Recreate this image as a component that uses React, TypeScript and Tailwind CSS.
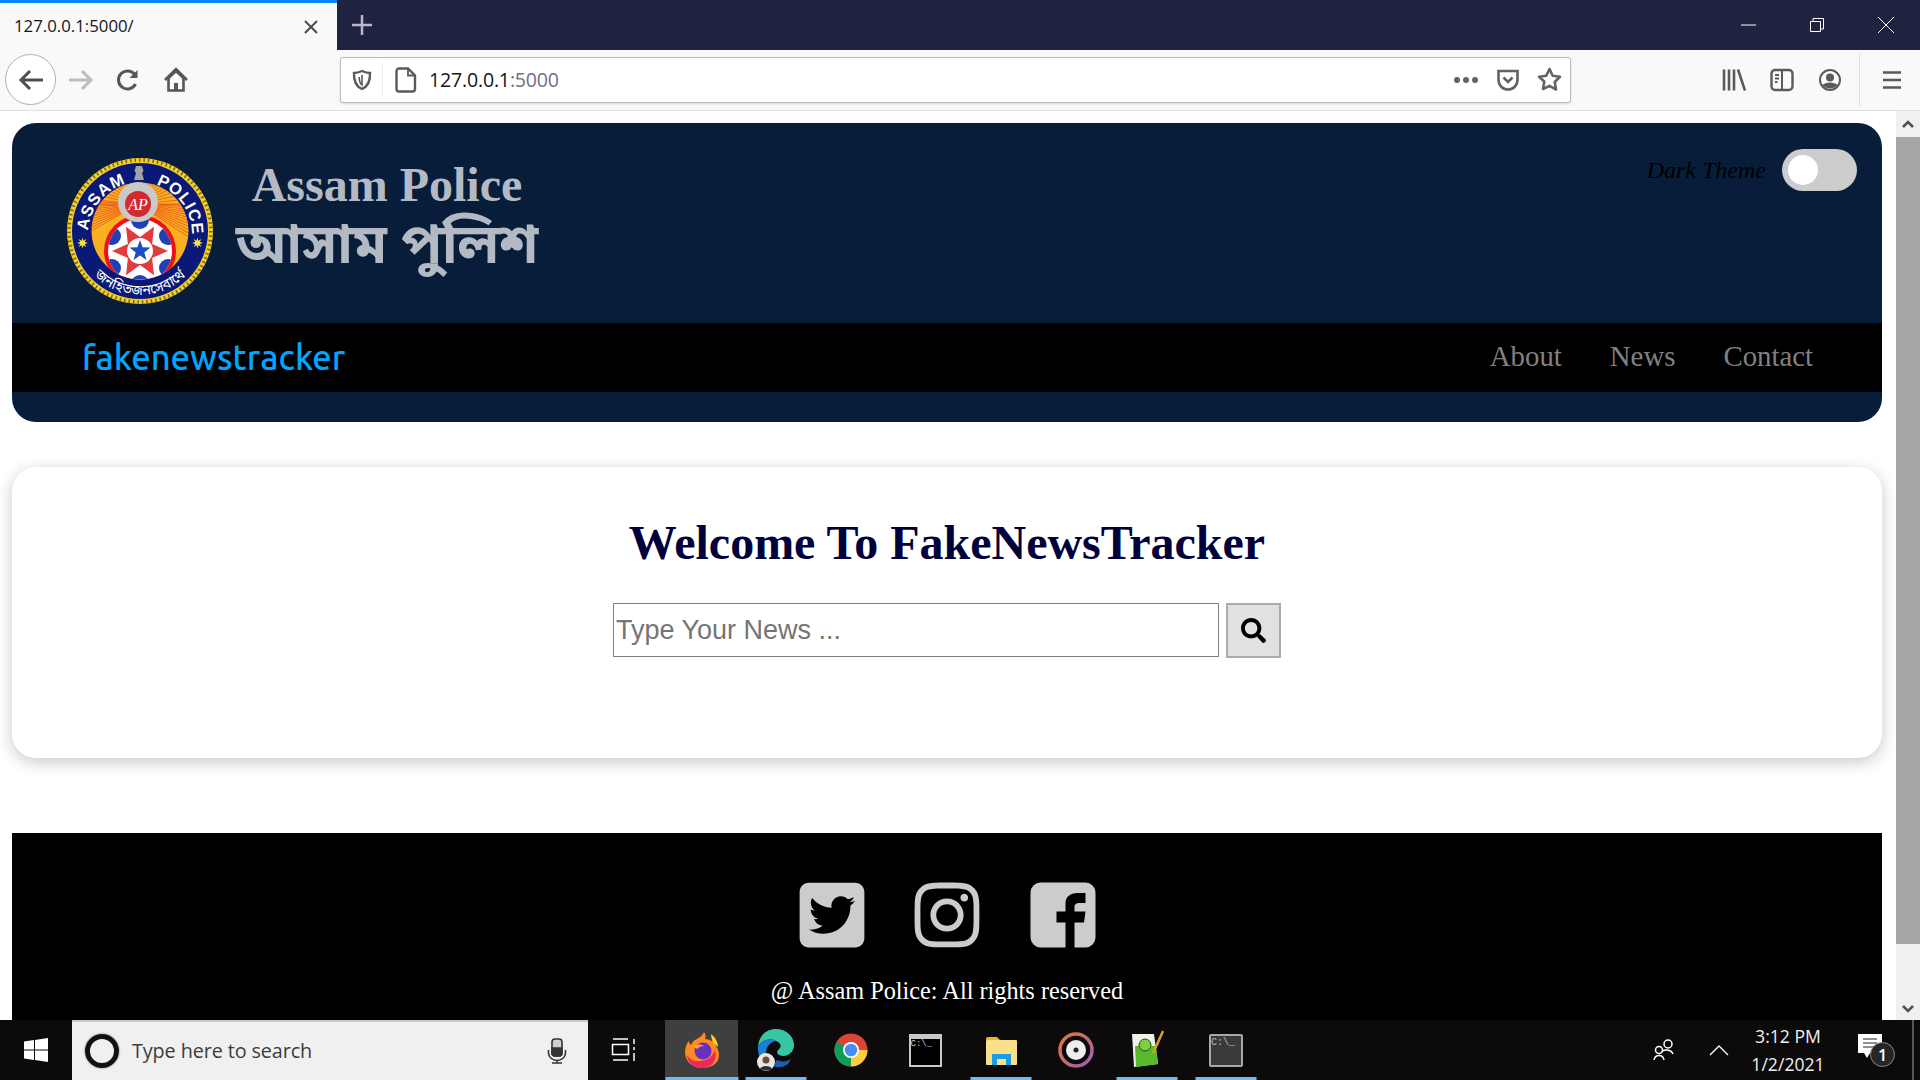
import { FaSearch } from "react-icons/fa";
import { FaInstagram, FaSquareTwitter } from "react-icons/fa6";

// Browser tab strip with window controls
const TabBar = () => (
  <div className="flex h-[50px] bg-[#20233f] text-[#fbfbfe]">
    <div className="flex w-[337px] items-center justify-between border-t-[3px] border-[#0a84ff] bg-[#f9f9fa] pl-[14px] pr-[18px] text-[16.8px] text-[#15141a]">
      <span className="pb-[2px]">127.0.0.1:5000/</span>
      <svg width="16" height="16" viewBox="0 0 16 16" stroke="#4a4a4f" strokeWidth="2" fill="none">
        <path d="M2 2l12 12M14 2L2 14" />
      </svg>
    </div>
    <div className="flex w-[50px] items-center justify-center">
      <svg width="22" height="22" viewBox="0 0 22 22" stroke="#b8bac6" strokeWidth="2.5" fill="none">
        <path d="M11 1v20M1 11h20" />
      </svg>
    </div>
    <div className="flex-1" />
    <div className="flex w-[69px] items-center justify-center">
      <svg width="16" height="16" viewBox="0 0 16 16" stroke="#fff" fill="none">
        <path d="M0 8h15" />
      </svg>
    </div>
    <div className="flex w-[69px] items-center justify-center pr-[2px]">
      <svg width="16" height="16" viewBox="0 0 16 16" stroke="#fff" fill="none">
        <path d="M1.5 4.5h10v10h-10zM4 4V1.5h10.5V12H12" />
      </svg>
    </div>
    <div className="flex w-[68px] items-center justify-center">
      <svg width="18" height="18" viewBox="0 0 18 18" stroke="#fff" fill="none">
        <path d="M1 1l16 16M17 1L1 17" />
      </svg>
    </div>
  </div>
);

// Navigation row with the address bar
const Toolbar = () => (
  <div className="flex h-[61px] items-center border-b border-[#e0e0e1] bg-[#f9f9fa] pb-[1px]">
    <div className="ml-[5px] flex h-[51px] w-[51px] items-center justify-center rounded-full border border-[#b1b1b3] bg-white">
      <svg width="26" height="24" viewBox="0 0 26 24" stroke="#4f4f52" strokeWidth="3" fill="none">
        <path d="M25 12H3M12 3l-9 9 9 9" />
      </svg>
    </div>
    <div className="flex w-[49px] justify-center">
      <svg width="26" height="24" viewBox="0 0 26 24" stroke="#bcbcbe" strokeWidth="3" fill="none">
        <path d="M1 12h22M14 3l9 9-9 9" />
      </svg>
    </div>
    <div className="flex w-[46px] justify-center">
      <svg width="24" height="24" viewBox="0 0 24 24" stroke="#55555a" strokeWidth="3" fill="none">
        <path d="M19.5 16a9 9 0 1 1-.5-9" />
        <path d="M21.5 2v8h-8" fill="#55555a" stroke="none" />
      </svg>
    </div>
    <div className="flex w-[50px] justify-center">
      <svg width="26" height="26" viewBox="0 0 26 26" fill="#55555a" stroke="#55555a" strokeWidth="2.6">
        <path d="M2 13L13 2l11 11" fill="none" />
        <path d="M5.5 11v12.5h15V11L13 4z" fill="none" />
        <rect x="11" y="16" width="4" height="7" stroke="none" />
      </svg>
    </div>
    <div className="ml-[139px] flex h-[46px] w-[1231px] items-center rounded-[3px] border border-[#bcbcbc] bg-white shadow-sm">
      <div className="flex h-[34px] w-[42px] items-center justify-center border-r border-[#ececec]">
        <svg width="20" height="22" viewBox="0 0 20 22" fill="none" stroke="#5a5a5e" strokeWidth="2.4">
          <path d="M10 2c3 1.4 5.500 2 8 2 .3 7-1 13-8 16C3 17 1.700 11 2 4c2.500 0 5-.6 8-2z" />
          <path d="M10 6v10c-2-1.500-2.800-5-2.800-8" strokeWidth="1.6" />
        </svg>
      </div>
      <div className="flex w-[46px] justify-center">
        <svg width="22" height="26" viewBox="0 0 22 26" fill="none" stroke="#5a5a5e" strokeWidth="2.4">
          <path d="M4 1.500h9l7 7V22a2.500 2.500 0 0 1-2.500 2.500H4A2.500 2.500 0 0 1 1.500 22V4A2.500 2.500 0 0 1 4 1.500z" />
          <path d="M13 2v6.500h7" strokeWidth="1.8" />
        </svg>
      </div>
      <div className="text-[19.6px] leading-none tracking-[-0.2px] text-[#15141a]">
        127.0.0.1<span className="text-[#6f7080]">:5000</span>
      </div>
      <div className="flex-1" />
      <div className="flex w-[40px] justify-center gap-[3px]">
        <span className="h-[6px] w-[6px] rounded-full bg-[#636367]" />
        <span className="h-[6px] w-[6px] rounded-full bg-[#636367]" />
        <span className="h-[6px] w-[6px] rounded-full bg-[#636367]" />
      </div>
      <div className="flex w-[44px] justify-center">
        <svg width="24" height="24" viewBox="0 0 24 24" fill="none" stroke="#636367" strokeWidth="2.6">
          <path d="M2.500 3h19v9a9.500 9.500 0 0 1-19 0z" />
          <path d="M7.500 9.500l4.500 4.500 4.500-4.500" />
        </svg>
      </div>
      <div className="flex w-[40px] justify-center pr-[2px]">
        <svg width="25" height="25" viewBox="0 0 25 25" fill="none" stroke="#636367" strokeWidth="2.6" strokeLinejoin="round">
          <path d="M12.500 2l3.200 6.800 7.300 1-5.300 5.200 1.300 7.500-6.500-3.600L6 22l1.300-7.500L2 9.800l7.300-1z" />
        </svg>
      </div>
    </div>
    <div className="ml-[139px] flex w-[48px] justify-center">
      <svg width="24" height="24" viewBox="0 0 24 24" fill="none" stroke="#5a5a5e" strokeWidth="2.6">
        <path d="M2 1.500v21M7 1.500v21M12 1.500v21M16 1.500l7 21" />
      </svg>
    </div>
    <div className="flex w-[48px] justify-center">
      <svg width="24" height="24" viewBox="0 0 24 24" fill="none" stroke="#5a5a5e" strokeWidth="2.4">
        <rect x="1.500" y="2" width="21" height="20" rx="3.500" />
        <path d="M12 2v20M5 7h4M5 10.500h4M5 14h2.500" strokeWidth="2" />
      </svg>
    </div>
    <div className="flex w-[48px] justify-center">
      <svg width="24" height="24" viewBox="0 0 24 24" fill="none" stroke="#5a5a5e" strokeWidth="2">
        <circle cx="12" cy="12" r="10" />
        <circle cx="12" cy="9.500" r="4" fill="#5a5a5e" stroke="none" />
        <path d="M4.500 17c3-3.500 12-3.500 15 0-3 4.500-12 4.500-15 0z" fill="#5a5a5e" stroke="none" />
      </svg>
    </div>
    <div className="ml-[5px] h-[54px] w-[1px] bg-[#e0e0e1]" />
    <div className="flex w-[60px] justify-center pl-[4px]">
      <svg width="20" height="20" viewBox="0 0 20 20" stroke="#5a5a5e" strokeWidth="2.6" fill="none">
        <path d="M1 2.500h18M1 10h18M1 17.500h18" />
      </svg>
    </div>
  </div>
);

const starPoints = (cx: number, cy: number, points: number, outer: number, inner: number, start: number) =>
  Array.from({ length: points * 2 }, (_, i) => {
    const r = i % 2 === 0 ? outer : inner;
    const a = ((start + (i * 180) / points) * Math.PI) / 180;
    return `${cx + r * Math.cos(a)},${cy + r * Math.sin(a)}`;
  }).join(" ");

// Assam Police crest
const Emblem = () => {
  const rays = Array.from({ length: 29 }, (_, i) => 179 + i * 6.5).concat(
    Array.from({ length: 12 }, (_, i) => 150 + i * 3),
    Array.from({ length: 12 }, (_, i) => i * 3)
  );
  return (
    <svg width="146" height="146" viewBox="0 0 146 146">
      <defs>
        <path id="topArc" d="M21 76A52 52 0 1 1 125 76" />
        <path id="bottomArc" d="M17.600 105A64 64 0 0 0 128.400 105" />
        <clipPath id="discClip">
          <circle cx="73" cy="73" r="48.500" />
        </clipPath>
        <clipPath id="whiteClip">
          <circle cx="73" cy="93" r="32" />
        </clipPath>
      </defs>
      <circle cx="73" cy="73" r="73" fill="#f2cf2a" />
      <circle cx="73" cy="73" r="71" fill="none" stroke="#7a6412" strokeWidth="3.500" strokeDasharray="1.500 3" />
      <circle cx="73" cy="73" r="68" fill="#0a1878" />
      <g clipPath="url(#discClip)">
        <circle cx="73" cy="73" r="49" fill="#fbb022" />
        <g stroke="#e8561c" strokeWidth="0.800">
          {rays.map((angle) => (
            <line
              key={angle}
              x1="71"
              y1="46"
              x2={71 + 70 * Math.cos((angle * Math.PI) / 180)}
              y2={46 + 70 * Math.sin((angle * Math.PI) / 180)}
            />
          ))}
        </g>
        <circle cx="73" cy="93" r="36" fill="#ef0f14" />
        <circle cx="73" cy="93" r="32" fill="#ffffff" />
        <g clipPath="url(#whiteClip)" fill="#2140b5">
          <circle cx="73" cy="62" r="9" />
          <circle cx="45" cy="78" r="9" />
          <circle cx="101" cy="78" r="9" />
          <circle cx="45" cy="110" r="9" />
          <circle cx="101" cy="110" r="9" />
          <circle cx="73" cy="126" r="9" />
        </g>
        <polygon points={starPoints(73, 93, 6, 28, 14, 0)} fill="#e23a3f" />
        <circle cx="73" cy="93" r="13" fill="#ffffff" />
        <polygon points={starPoints(73, 93, 5, 11, 4.500, -90)} fill="#1d4fc4" />
      </g>
      <circle cx="71" cy="44" r="20" fill="#c9c9c9" />
      <circle cx="71" cy="46" r="13" fill="#d32a2f" />
      <text x="71" y="52" textAnchor="middle" fontSize="16" fontFamily="'Liberation Serif', serif" fontStyle="italic" fill="#fff">
        AP
      </text>
      <path d="M69 8h6l1.500 5-1.500 2 2 7h-10l2-7-1.500-2z" fill="#a3a3a3" />
      <text fontSize="16.500" fontWeight="700" fontFamily="'Liberation Sans', sans-serif" fill="#fff" letterSpacing="1">
        <textPath href="#topArc" startOffset="2%">ASSAM</textPath>
      </text>
      <text fontSize="16.500" fontWeight="700" fontFamily="'Liberation Sans', sans-serif" fill="#fff" letterSpacing="0.800">
        <textPath href="#topArc" startOffset="60%">POLICE</textPath>
      </text>
      <text fontSize="14" fill="#fff" fontFamily="'Noto Sans Bengali', 'Noto Sans', sans-serif" textAnchor="middle">
        <textPath href="#bottomArc" startOffset="50%">জনহিতজনসেবার্থে</textPath>
      </text>
      <polygon points={starPoints(15.500, 85, 8, 5.500, 2.500, 0)} fill="#f7e23a" />
      <polygon points={starPoints(130.500, 85, 8, 5.500, 2.500, 0)} fill="#f7e23a" />
    </svg>
  );
};

// Site header with logo, theme toggle and nav links
const Header = () => (
  <header className="mt-[12px] h-[299px] rounded-[24px] bg-[#071d3a] pb-[30px]">
    <div className="flex h-[200px] justify-between pl-[55px] pr-[25px]">
      <div className="flex pt-[35px]">
        <Emblem />
        <div className="ml-[22px] flex w-[304px] flex-col items-center">
          <div className="mt-[3px] font-['Liberation_Serif',serif] text-[48px] font-bold leading-[48px] text-[#b4bac4]">
            Assam Police
          </div>
          <div className="mt-[4px] whitespace-nowrap font-['Noto_Sans_Bengali','Noto_Sans',sans-serif] text-[55px] font-bold leading-[72px] text-[#b4bac4]">
            আসাম পুলিশ
          </div>
        </div>
      </div>
      <div className="flex h-fit items-center gap-[16px] pt-[26px]">
        <span className="font-['Liberation_Serif',serif] text-[24px] italic text-black">Dark Theme</span>
        <div className="flex h-[42px] w-[75px] items-center rounded-full bg-[#cccccc] px-[6px]">
          <div className="h-[30px] w-[30px] rounded-full bg-white" />
        </div>
      </div>
    </div>
    <nav className="flex h-[69px] items-center justify-between bg-black pl-[70px] pr-[69px]">
      <a className="pt-[1px] font-['Ubuntu','Noto_Sans',sans-serif] text-[34.6px] font-medium text-[#00a5ff]">fakenewstracker</a>
      <div className="flex gap-[48px] pb-[2px] font-['Liberation_Serif',serif] text-[28.8px] text-[#808080]">
        <a>About</a>
        <a>News</a>
        <a>Contact</a>
      </div>
    </nav>
  </header>
);

const SearchCard = () => (
  <section className="mt-[45px] h-[291px] rounded-[24px] bg-white pt-[48px] shadow-[0_4px_16px_rgba(0,0,0,0.22)]">
    <h1 className="text-center font-['Liberation_Serif',serif] text-[48px] font-bold leading-[55px] text-[#00003a]">
      Welcome To FakeNewsTracker
    </h1>
    <div className="mt-[33px] flex justify-center gap-[7px]">
      <input
        className="h-[54px] w-[606px] border border-[#808080] px-[2px] font-['Liberation_Sans',sans-serif] text-[27px] outline-none placeholder:text-[#757575]"
        placeholder="Type Your News ..."
      />
      <button className="flex h-[55px] w-[55px] items-center justify-center border-2 border-[#ababab] bg-[#e1e1e1] text-[25px] text-black">
        <FaSearch />
      </button>
    </div>
  </section>
);

const Footer = () => (
  <footer className="mt-[75px] flex-1 bg-black pt-[45px] text-center">
    <div className="flex items-center justify-center gap-[41.500px] text-[74px] text-[#cccccc]">
      <FaSquareTwitter />
      <FaInstagram />
      <svg width="74" height="74" viewBox="-4.500 -4.500 74 74" fill="currentColor">
        <path
          fillRule="evenodd"
          d="M10 0h45a10 10 0 0 1 10 10v45a10 10 0 0 1-10 10H44V40h9.500L55 29H44v-4.500c0-3 2-4 5-4h6v-10h-8C40 10.500 35 14 35 21v8h-9v11h9v25H10A10 10 0 0 1 0 55V10A10 10 0 0 1 10 0z"
        />
      </svg>
    </div>
    <p className="mt-[21px] font-['Liberation_Serif',serif] text-[24.3px] text-white">@ Assam Police: All rights reserved</p>
  </footer>
);

const ScrollBar = () => (
  <div className="flex w-[24px] flex-col bg-[#f0f0f0]">
    <div className="flex h-[26px] items-center justify-center">
      <svg width="12" height="8" viewBox="0 0 12 8" stroke="#505050" strokeWidth="2.500" fill="none">
        <path d="M1 7l5-5 5 5" />
      </svg>
    </div>
    <div className="h-[807px] bg-[#a6a6a6]" />
    <div className="flex-1" />
    <div className="flex h-[26px] items-center justify-center pt-[4px]">
      <svg width="12" height="8" viewBox="0 0 12 8" stroke="#505050" strokeWidth="2.500" fill="none">
        <path d="M1 1l5 5 5-5" />
      </svg>
    </div>
  </div>
);

// Taskbar app icons
const FirefoxIcon = () => (
  <svg width="36" height="38" viewBox="0 0 36 38">
    <path d="M18 37C8 37 1 30 1 21c0-5 2-9 4-11 0 2 1 3 2 4 1-3 3-5 6-6 3-2 6-4 7-7 2 3 2 5 1 7 5 0 9 3 11 7 2 3 3 6 3 9 0 8-7 13-17 13z" fill="#ff8a1f" />
    <path d="M18 37C9 37 3 31 3 24c3 5 8 7 14 6 7-1 12-5 14-11 3 10-3 18-13 18z" fill="#f0285a" />
    <path d="M27 3c4 3 7 8 7 13l-5-4c-1-3-2-6-2-9z" fill="#ffc928" />
    <circle cx="19" cy="20" r="8.500" fill="#6a2fc0" />
    <path d="M9 15c4-2 8-2 11 0-3 0-5 1-7 3z" fill="#ffa52a" />
  </svg>
);

const EdgeIcon = () => (
  <svg width="38" height="44" viewBox="0 0 38 44">
    <path d="M19 1C9 1 2 8 1 18c4-6 12-8 18-5 5 2 6 6 3 8-2 2-3 4 0 6 6 3 15-1 15-10C37 8 29 1 19 1z" fill="#37c6a3" />
    <path d="M1 18c4-6 12-8 18-5-6 1-10 6-10 12 0 7 4 12 10 14C9 40 0 32 1 18z" fill="#1a7fd0" />
    <path d="M19 39c7 1 13-2 15-8-4 3-10 3-14 1-2 2-3 5-1 7z" fill="#1b5fb5" />
    <circle cx="9" cy="34" r="9" fill="#e8e6e2" />
    <path d="M3 41c1-4 11-4 12 0-3 2-9 2-12 0z" fill="#2a2f33" />
    <circle cx="9" cy="32" r="3.500" fill="#6b4a3a" />
  </svg>
);

const ChromeIcon = () => (
  <svg width="34" height="42" viewBox="0 0 34 34">
    <circle cx="17" cy="17" r="16.500" fill="#dc4437" />
    <path d="M17 17L2.700 8.700A16.500 16.500 0 0 0 17 33.500L25 17z" fill="#0f9d58" />
    <path d="M17 17h16.500A16.500 16.500 0 0 1 17 33.500z" fill="#ffcd40" />
    <circle cx="17" cy="17" r="8" fill="#fff" />
    <circle cx="17" cy="17" r="6.300" fill="#4c8bf5" />
  </svg>
);

const CmdIcon = () => (
  <div className="h-[33px] w-[33px] border-2 border-[#c8c8c8] bg-black">
    <div className="h-[3px] bg-[#c8c8c8]" />
    <div className="font-['Liberation_Mono',monospace] text-[9px] leading-[11px] text-[#c8c8c8]">C:\_</div>
  </div>
);

const ExplorerIcon = () => (
  <svg width="33" height="33" viewBox="0 0 33 33">
    <path d="M1 5a2 2 0 0 1 2-2h9l3 3h-14z" fill="#f0b429" />
    <rect x="1" y="6" width="31" height="25" rx="1" fill="#fbe08a" />
    <path d="M7 31V20h19v11h-5v-6h-9v6z" fill="#1c9be6" />
  </svg>
);

const GrooveIcon = () => (
  <svg width="36" height="44" viewBox="0 0 36 36">
    <defs>
      <linearGradient id="grooveRing" x1="0" y1="0" x2="1" y2="1">
        <stop offset="0" stopColor="#e8733a" />
        <stop offset="1" stopColor="#9c5fb5" />
      </linearGradient>
    </defs>
    <circle cx="18" cy="18" r="16" fill="none" stroke="url(#grooveRing)" strokeWidth="3.500" />
    <circle cx="18" cy="18" r="10" fill="#eeeeee" />
    <circle cx="18" cy="18" r="2.500" fill="#222" />
  </svg>
);

const NotepadIcon = () => (
  <svg width="36" height="40" viewBox="0 0 36 40">
    <path d="M3 4h22l4 30-24 3z" fill="#eef2e6" />
    <path d="M6 16h21l2 18-22 3z" fill="#58b82e" />
    <circle cx="16" cy="15" r="6" fill="#7ccf3e" stroke="#2a4a1a" />
    <path d="M34 1l-8 18-2 4" stroke="#e0a020" strokeWidth="2.500" fill="none" />
  </svg>
);

const TerminalIcon = () => (
  <div className="h-[33px] w-[34px] rounded-[2px] border-2 border-[#a8a8a8] bg-[#3a3a3a] font-['Liberation_Mono',monospace] text-[10px] leading-[14px] text-[#b8b8b8]">
    C:\_
  </div>
);

const TaskbarApp = ({ width, running, active, children }: { width: string; running?: boolean; active?: boolean; children: React.ReactNode }) => (
  <div className={`relative flex h-full items-center justify-center ${width} ${active ? "bg-[#3f3f3f]" : ""}`}>
    {children}
    {running && <div className={`absolute bottom-0 left-1/2 h-[3px] -translate-x-1/2 bg-[#76b9ed] ${active ? "w-full" : "w-[61px]"}`} />}
  </div>
);

const Taskbar = () => (
  <div className="flex h-[60px] items-center bg-[#0c0a0a] text-white">
    <div className="flex h-full w-[72px] items-center justify-center">
      <svg width="24" height="24" viewBox="0 0 24 24" fill="#fff">
        <path d="M0 3.500l10-1.400v9.400H0zM11 2l13-2v11.500H11zM0 12.500h10v9.400L0 20.500zM11 12.500h13V24l-13-2z" />
      </svg>
    </div>
    <div className="flex h-full w-[516px] items-center border-t-2 border-[#c8c8c8] bg-[#f0f0f0] pl-[13px] text-black">
      <div className="h-[34px] w-[34px] rounded-full border-[5px] border-[#111] shadow-[0_0_2px_#555]" />
      <span className="ml-[13px] flex-1 font-['Open_Sans',sans-serif] text-[19.8px] tracking-[-0.1px] text-[#3c3c3c]">Type here to search</span>
      <svg className="mr-[21px]" width="20" height="26" viewBox="0 0 20 26" fill="none" stroke="#333" strokeWidth="1.600">
        <rect x="5" y="1" width="10" height="17" rx="3" fill="#cfcfcf" />
        <path d="M5 10h10v5a3 3 0 0 1-3 3H8a3 3 0 0 1-3-3z" fill="#333" />
        <path d="M1.500 12v3a8 7 0 0 0 17 0v-3M10 22v3M5 25h10" />
      </svg>
    </div>
    <div className="flex h-full w-[77px] items-center justify-center pr-[7px]">
      <svg width="26" height="24" viewBox="0 0 26 24" stroke="#fff" strokeWidth="1.500" fill="none">
        <path d="M3 1h15M2.500 6.500h16v10h-16zM3 22h15M24 1v5M24 9v3M24 15v8" />
      </svg>
    </div>
    <TaskbarApp width="w-[73px]" active running>
      <FirefoxIcon />
    </TaskbarApp>
    <TaskbarApp width="w-[76px]" running>
      <EdgeIcon />
    </TaskbarApp>
    <TaskbarApp width="w-[74px]">
      <ChromeIcon />
    </TaskbarApp>
    <TaskbarApp width="w-[74px]">
      <CmdIcon />
    </TaskbarApp>
    <TaskbarApp width="w-[78px]" running>
      <ExplorerIcon />
    </TaskbarApp>
    <TaskbarApp width="w-[72px]">
      <GrooveIcon />
    </TaskbarApp>
    <TaskbarApp width="w-[70px]" running>
      <NotepadIcon />
    </TaskbarApp>
    <TaskbarApp width="w-[88px]" running>
      <TerminalIcon />
    </TaskbarApp>
    <div className="flex-1" />
    <svg width="24" height="24" viewBox="0 0 24 24" stroke="#fff" strokeWidth="1.500" fill="none">
      <circle cx="16" cy="6" r="4" />
      <path d="M10 14c1-3 9-3 11 2" />
      <circle cx="7" cy="12" r="3.500" />
      <path d="M2 22c1-6 9-6 10 0" />
    </svg>
    <svg className="ml-[33px]" width="20" height="12" viewBox="0 0 20 12" stroke="#fff" strokeWidth="1.300" fill="none">
      <path d="M1 11l9-9 9 9" />
    </svg>
    <div className="ml-[22px] flex w-[74px] flex-col items-center font-['Open_Sans',sans-serif] text-[17.600px] leading-[28px] text-[#f0f0f0]">
      <span>3:12 PM</span>
      <span>1/2/2021</span>
    </div>
    <div className="relative ml-[33px] h-[40px] w-[46px]">
      <svg className="absolute left-0 top-[4px]" width="24" height="26" viewBox="0 0 24 26" fill="#fff">
        <path d="M0 0h24v19H12l-3 5-3-5H0z" />
        <path d="M5 5h14M5 9h14M5 13h14" stroke="#222" strokeWidth="1.200" />
      </svg>
      <div className="absolute left-[12px] top-[12px] flex h-[25px] w-[25px] items-center justify-center rounded-full border border-[#888] bg-[#262626] text-[16px] font-semibold text-white">
        1
      </div>
    </div>
    <div className="ml-[8px] h-full w-[8px] border-l-2 border-[#555]" />
  </div>
);

const App = () => {
  return (
    <div className="flex h-screen w-full flex-col overflow-hidden bg-white font-['Open_Sans',sans-serif]">
      <TabBar />
      <Toolbar />
      <div className="flex min-h-0 flex-1">
        <main className="flex min-w-0 flex-1 flex-col overflow-hidden pl-[12px] pr-[14px]">
          <Header />
          <SearchCard />
          <Footer />
        </main>
        <ScrollBar />
      </div>
      <Taskbar />
    </div>
  );
};

export default App;
